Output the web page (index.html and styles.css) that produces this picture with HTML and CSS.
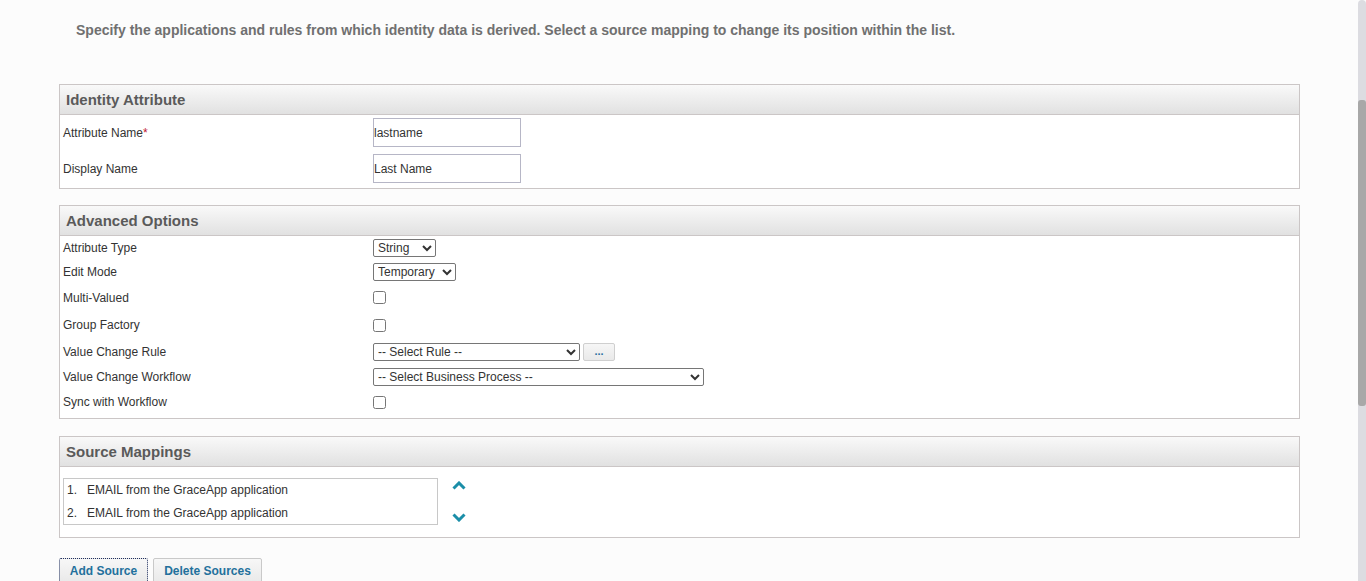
FILE: index.html
```html
<!DOCTYPE html>
<html lang="en">
<head>
<meta charset="utf-8">
<title>Identity Attribute</title>
<link rel="stylesheet" href="styles.css">
</head>
<body>
<div class="page">
  <p class="intro">Specify the applications and rules from which identity data is derived. Select a source mapping to change its position within the list.</p>

  <section class="panel">
    <div class="panel-head">Identity Attribute</div>
    <div class="panel-body form-a">
      <div class="row r29"><span class="label">Attribute Name<span class="req">*</span></span><span class="val"><input class="text" type="text" value="lastname"></span></div>
      <div class="row r29"><span class="label">Display Name</span><span class="val"><input class="text" type="text" value="Last Name"></span></div>
    </div>
  </section>

  <section class="panel">
    <div class="panel-head">Advanced Options</div>
    <div class="panel-body form-b">
      <div class="row h23"><span class="label">Attribute Type</span><span class="val"><select class="sel w63"><option>String</option></select></span></div>
      <div class="row h25"><span class="label">Edit Mode</span><span class="val"><select class="sel w83"><option>Temporary</option></select></span></div>
      <div class="row h27"><span class="label">Multi-Valued</span><span class="val"><input class="chk" type="checkbox"></span></div>
      <div class="row h28"><span class="label">Group Factory</span><span class="val"><input class="chk" type="checkbox"></span></div>
      <div class="row h26"><span class="label">Value Change Rule</span><span class="val"><select class="sel w207"><option>-- Select Rule --</option></select><button class="dots" type="button">...</button></span></div>
      <div class="row h24"><span class="label">Value Change Workflow</span><span class="val"><select class="sel w331"><option>-- Select Business Process --</option></select></span></div>
      <div class="row h26"><span class="label">Sync with Workflow</span><span class="val"><input class="chk" type="checkbox"></span></div>
    </div>
  </section>

  <section class="panel">
    <div class="panel-head">Source Mappings</div>
    <div class="panel-body mappings">
      <div class="listbox">
        <div class="item"><span class="num">1.</span>EMAIL from the GraceApp application</div>
        <div class="item"><span class="num">2.</span>EMAIL from the GraceApp application</div>
      </div>
      <div class="movers">
        <svg class="chev" width="14" height="9" viewBox="0 0 14 9"><path d="M1.5 7.5 L7 2 L12.5 7.5" fill="none" stroke="currentColor" stroke-width="3"/></svg>
        <svg class="chev" width="14" height="9" viewBox="0 0 14 9"><path d="M1.5 1.5 L7 7 L12.5 1.5" fill="none" stroke="currentColor" stroke-width="3"/></svg>
      </div>
    </div>
  </section>

  <div class="actions">
    <button class="btn focused" type="button">Add Source</button>
    <button class="btn wide" type="button">Delete Sources</button>
  </div>
</div>
<div class="scrollbar"><div class="thumb"></div></div>
</body>
</html>
```

FILE: styles.css
```css
html, body {
  margin: 0;
  padding: 0;
  overflow: hidden;
  height: 581px;
}
body {
  background: #fcfcfc;
  font-family: "Liberation Sans", Arial, sans-serif;
  font-size: 12px;
  color: #333;
}
.page {
  width: 1241px;
  margin-left: 59px;
}
.intro {
  margin: 0;
  padding: 22px 0 0 17px;
  height: 84px;
  box-sizing: border-box;
  font-size: 14px;
  font-weight: bold;
  line-height: 16px;
  color: #707070;
}
.panel {
  border: 1px solid #cbc6c6;
  background: #fff;
  margin-bottom: 16px;
}
.panel:nth-of-type(2) { margin-bottom: 17px; }
.panel:nth-of-type(3) { margin-bottom: 20px; }
.panel-head {
  height: 29px;
  line-height: 29px;
  padding-left: 6px;
  font-size: 15px;
  font-weight: bold;
  color: #5a5a5a;
  background: linear-gradient(#f9f9f9, #e1e1e1);
  border-bottom: 1px solid #cbc6c6;
}
.panel-body {
  padding: 0 3px;
}
.form-a {
  display: flex;
  flex-direction: column;
  gap: 7px;
  padding-top: 3px;
  padding-bottom: 5px;
}
.form-b {
  display: flex;
  flex-direction: column;
  padding-bottom: 3px;
}
.row {
  display: grid;
  grid-template-columns: 310px 1fr;
  align-items: center;
}
.r29 { height: 29px; }
.h23 { height: 23px; }
.h24 { height: 24px; }
.h25 { height: 25px; }
.h26 { height: 26px; }
.h27 { height: 27px; }
.h28 { height: 28px; }
.label {
  color: #333;
  line-height: 14px;
}
.req { color: #c0182f; }
.val {
  display: flex;
  align-items: center;
  gap: 3px;
}
.text {
  width: 148px;
  height: 29px;
  box-sizing: border-box;
  border: 1px solid #b6b6c6;
  padding: 0;
  margin: 0;
  font-family: "Liberation Sans", Arial, sans-serif;
  font-size: 12px;
  color: #333;
  background: #fff;
}
.sel {
  height: 18px;
  box-sizing: border-box;
  margin: 0;
  padding: 0;
  border: 1px solid #767676;
  border-radius: 2px;
  font-family: "Liberation Sans", Arial, sans-serif;
  font-size: 12px;
  color: #333;
  background: #fff;
}
.w63 { width: 63px; }
.w83 { width: 83px; }
.w207 { width: 207px; }
.w331 { width: 331px; }
.chk {
  width: 13px;
  height: 13px;
  margin: 0;
}
.dots {
  width: 32px;
  height: 18px;
  margin: 0;
  padding: 0 0 2px;
  border: 1px solid #cfcfcf;
  border-radius: 2px;
  background: linear-gradient(#f6f6f6, #e9e9e9);
  color: #2a6fa0;
  font-family: "Liberation Sans", Arial, sans-serif;
  font-size: 11px;
  font-weight: bold;
  line-height: 12px;
}
.mappings {
  display: flex;
  align-items: flex-start;
  padding-top: 11px;
  padding-bottom: 12px;
}
.listbox {
  width: 375px;
  height: 47px;
  box-sizing: border-box;
  border: 1px solid #c8c8c8;
  background: #fff;
  padding-top: 3px;
}
.item {
  height: 23px;
  line-height: 16px;
  padding-left: 3px;
  color: #333;
}
.num {
  display: inline-block;
  width: 20px;
}
.movers {
  display: flex;
  flex-direction: column;
  gap: 23px;
  padding: 3px 0 0 14px;
  color: #1b8ea8;
}
.chev { display: block; }
.actions {
  display: flex;
  gap: 5px;
}
.btn {
  width: 109px;
  height: 27px;
  box-sizing: border-box;
  margin: 0;
  padding: 0;
  white-space: nowrap;
  border: 1px solid #c9c9c9;
  border-radius: 2px;
  background: linear-gradient(#f7f7f7, #e8e8e8);
  color: #23709c;
  font-family: "Liberation Sans", Arial, sans-serif;
  font-size: 12px;
  font-weight: bold;
  line-height: 25px;
}
.btn.focused {
  width: 89px;
  border: 1px dotted #1f2f5f;
}
.scrollbar {
  position: fixed;
  top: 0;
  right: 0;
  width: 8px;
  height: 581px;
  background: #dcdce1;
  border-radius: 4px 4px 0 0;
}
.thumb {
  position: absolute;
  top: 100px;
  left: 0;
  width: 8px;
  height: 306px;
  background: #a8a8a8;
  border-radius: 3px;
}
```
